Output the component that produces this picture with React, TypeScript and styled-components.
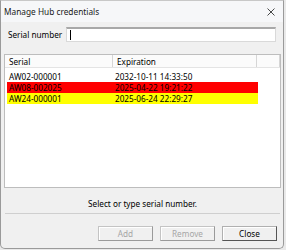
import React from "react";
import styled, { createGlobalStyle } from "styled-components";

const Global = createGlobalStyle`
  html, body { margin: 0; padding: 0; background: #e9e9e9; }
  body { font-family: "Noto Sans", "Open Sans", sans-serif; font-size: 8.2px; color: #000; }
  * { box-sizing: border-box; }
`;

const Window = styled.div`
  width: 284px;
  height: 249px;
  background: #f0f0f0;
  border: 1px solid #9a9a9a;
  border-top-color: #c8c8c8;
  border-radius: 0 0 5px 5px;
  display: flex;
  flex-direction: column;
`;

const TitleBar = styled.div`
  height: 21px;
  display: flex;
  align-items: center;
  justify-content: space-between;
  padding: 0 8px 0 3px;
  background: #f6f7f9;
`;

const Title = styled.span`
  font-size: 8.3px;
  color: #1a1a1a;
`;

const CloseX = styled.svg`
  width: 8px;
  height: 8px;
`;

const Body = styled.div`
  flex: 1;
  display: flex;
  flex-direction: column;
  padding: 5px 2px 0 3px;
`;

const SerialRow = styled.div`
  display: flex;
  align-items: center;
  gap: 4px;
  padding-left: 4px;
  padding-right: 5px;
`;

const Label = styled.label`
  font-size: 8.2px;
  white-space: nowrap;
`;

const Input = styled.div`
  flex: 1;
  height: 15px;
  background: #fff;
  border: 1px solid #d9d9d9;
  border-top: 2px solid #a8a8a8;
  display: flex;
  align-items: center;
  padding-left: 3px;
`;

const Caret = styled.span`
  width: 1px;
  height: 10px;
  background: #000;
`;

const List = styled.div`
  margin-top: 12px;
  height: 134px;
  background: #fff;
  border: 1px solid #bdbdbd;
  display: flex;
  flex-direction: column;
`;

const HeaderRow = styled.div`
  display: grid;
  grid-template-columns: 108px 144px 23px;
  height: 13px;
  background: #fbfbfb;
  border-bottom: 1px solid #e4e4e4;
`;

const HeaderCell = styled.div`
  padding-left: 4px;
  display: flex;
  align-items: center;
  border-right: 1px solid #d6d6d6;
  font-size: 8.2px;
`;

const Rows = styled.div`
  padding: 3px 0 0 2px;
  display: flex;
  flex-direction: column;
`;

const Row = styled.div<{ $bg: string }>`
  display: grid;
  grid-template-columns: 106px 145px;
  width: 251px;
  height: 11px;
  align-items: center;
  background: ${(p) => p.$bg};
`;

const Cell = styled.div`
  padding-left: 2px;
  font-size: 8.2px;
  line-height: 11px;
  white-space: nowrap;
`;

const Status = styled.div`
  text-align: center;
  margin-top: 10px;
  font-size: 8.2px;
`;

const Separator = styled.div`
  margin: 4px 1px 0 1px;
  height: 1px;
  background: #cfcfcf;
`;

const Buttons = styled.div`
  display: flex;
  justify-content: flex-end;
  gap: 7px;
  margin-top: 12px;
  padding-right: 4px;
`;

const Button = styled.button<{ $disabled?: boolean }>`
  width: 55px;
  height: 15px;
  font-family: inherit;
  font-size: 8.2px;
  padding: 0;
  background: #f0f0f0;
  color: ${(p) => (p.$disabled ? "#a6a6a6" : "#000")};
  border: 1px solid ${(p) => (p.$disabled ? "#c4c4c4" : "#b0b0b0")};
  border-right-color: ${(p) => (p.$disabled ? "#9a9a9a" : "#555")};
  border-bottom-color: ${(p) => (p.$disabled ? "#9a9a9a" : "#555")};
  box-shadow: inset 1px 1px 0 #fff;
`;

const data = [
  { serial: "AW02-000001", exp: "2032-10-11 14:33:50", bg: "transparent" },
  { serial: "AW08-002025", exp: "2025-04-22 19:21:22", bg: "#ff0000" },
  { serial: "AW24-000001", exp: "2025-06-24 22:29:27", bg: "#ffff00" },
];

export default function App() {
  return (
    <>
      <Global />
      <Window>
        <TitleBar>
          <Title>Manage Hub credentials</Title>
          <CloseX viewBox="0 0 8 8">
            <path d="M0.5 0.5 L7.5 7.5 M7.5 0.5 L0.5 7.5" stroke="#333" strokeWidth="0.9" />
          </CloseX>
        </TitleBar>
        <Body>
          <SerialRow>
            <Label>Serial number</Label>
            <Input>
              <Caret />
            </Input>
          </SerialRow>
          <List>
            <HeaderRow>
              <HeaderCell>Serial</HeaderCell>
              <HeaderCell>Expiration</HeaderCell>
              <HeaderCell />
            </HeaderRow>
            <Rows>
              {data.map((d) => (
                <Row key={d.serial} $bg={d.bg}>
                  <Cell>{d.serial}</Cell>
                  <Cell>{d.exp}</Cell>
                </Row>
              ))}
            </Rows>
          </List>
          <Status>Select or type serial number.</Status>
          <Separator />
          <Buttons>
            <Button $disabled>Add</Button>
            <Button $disabled>Remove</Button>
            <Button>Close</Button>
          </Buttons>
        </Body>
      </Window>
    </>
  );
}
